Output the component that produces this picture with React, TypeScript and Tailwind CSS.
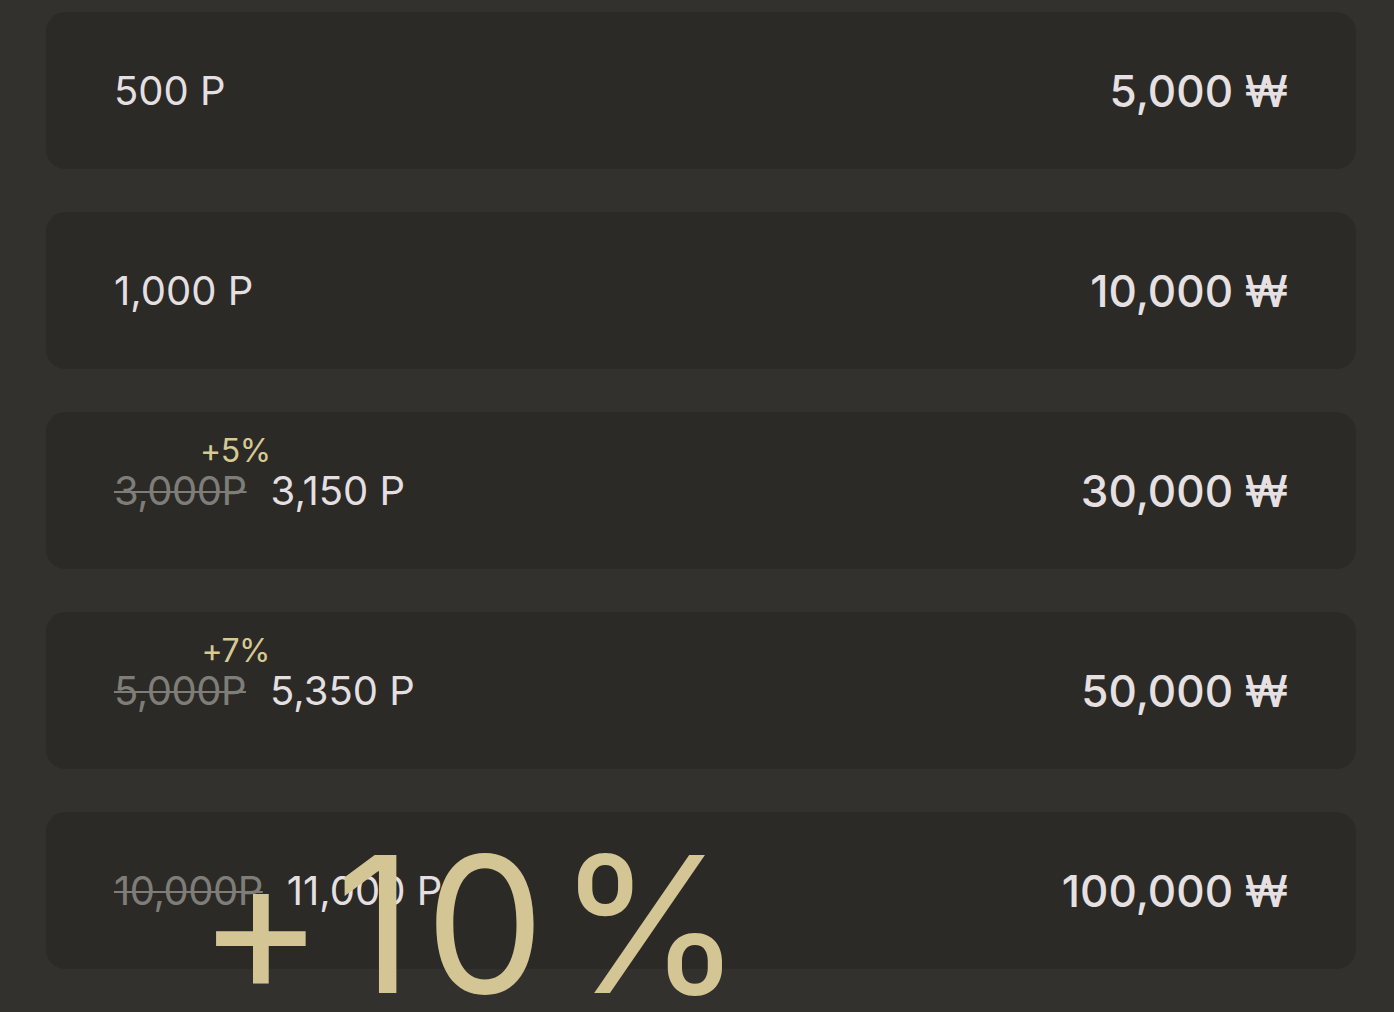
import React from "react";

type Pack = { points: string; price: string; base?: string; bonus?: string };

const packs: Pack[] = [
  { points: "500 P", price: "5,000 ₩" },
  { points: "1,000 P", price: "10,000 ₩" },
  { points: "3,150 P", price: "30,000 ₩", base: "3,000P", bonus: "+5%" },
  { points: "5,350 P", price: "50,000 ₩", base: "5,000P", bonus: "+7%" },
  { points: "11,000 P", price: "100,000 ₩", base: "10,000P" },
];

function PackRow({ pack }: { pack: Pack }) {
  return (
    <div className="flex h-[157px] items-center justify-between rounded-[20px] bg-[#2b2a26] pl-[68px] pr-[68px]">
      <div className="flex items-center gap-[24px]">
        {pack.base && (
          <span className="relative text-[40px] tracking-[-0.5px] text-[#7f7d78] line-through decoration-[2px]">
            {pack.base}
            {pack.bonus && (
              <span className="absolute right-[-24px] top-[-34px] text-[32px] text-[#d7c993] no-underline">
                {pack.bonus}
              </span>
            )}
          </span>
        )}
        <span className="text-[40px] text-[#e4dfe0]">{pack.points}</span>
      </div>
      <span className="text-[44px] font-medium text-[#e6e0e2]">{pack.price}</span>
    </div>
  );
}

export default function App() {
  return (
    <div
      className="relative h-[1012px] w-[1394px] overflow-hidden bg-[#33312d]"
      style={{ fontFamily: "Inter, 'Noto Sans', sans-serif" }}
    >
      <div className="flex flex-col gap-[43px] pl-[46px] pr-[38px] pt-[12px]">
        {packs.map((p) => (
          <PackRow key={p.price} pack={p} />
        ))}
      </div>

      {/* bonus splash over the last pack */}
      <div className="pointer-events-none absolute left-[198px] top-[829px] text-[190px] font-normal leading-none tracking-[12px] text-[#d4c594]">
        +10%
      </div>
    </div>
  );
}
